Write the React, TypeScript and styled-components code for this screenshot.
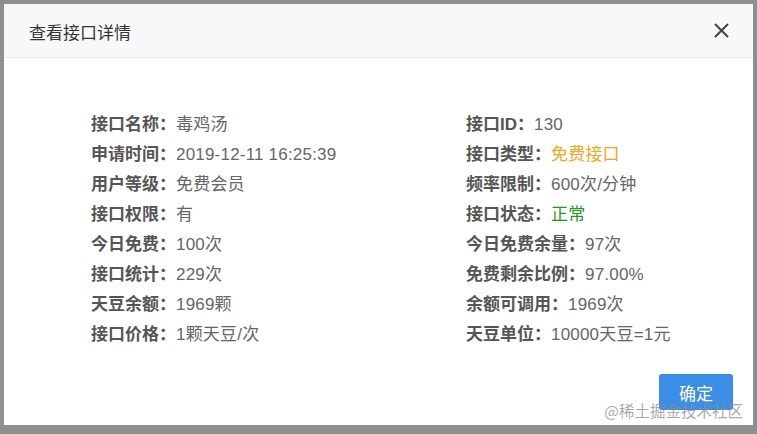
import React from "react";
import styled, { createGlobalStyle } from "styled-components";

const GlobalStyle = createGlobalStyle`
  html, body {
    margin: 0;
    padding: 0;
    background: #8f8f8f;
    font-family: "Liberation Sans", "Noto Sans CJK SC", sans-serif;
  }
`;

const Backdrop = styled.div`
  position: relative;
  width: 757px;
  height: 434px;
  padding: 4px 4px 9px 4px;
  box-sizing: border-box;
  background: #8f8f8f;
  overflow: hidden;
`;

const Modal = styled.div`
  width: 749px;
  height: 421px;
  background: #fff;
  display: flex;
  flex-direction: column;
`;

const Header = styled.div`
  height: 53px;
  flex-shrink: 0;
  display: flex;
  align-items: center;
  justify-content: space-between;
  padding: 0 22px 0 25px;
  background: #f8f8f8;
  border-bottom: 1px solid #e8e8e8;
`;

const Title = styled.span`
  font-size: 17px;
  color: #333;
  padding-top: 2px;
`;

const CloseButton = styled.button`
  border: none;
  background: transparent;
  padding: 0;
  width: 20px;
  height: 20px;
  display: flex;
  align-items: center;
  justify-content: center;
  cursor: pointer;
`;

const Body = styled.div`
  flex: 1;
  display: grid;
  grid-template-columns: 375px 1fr;
  grid-template-rows: repeat(8, 30px);
  grid-auto-flow: column;
  align-content: start;
  padding: 52px 0 0 87px;
`;

const Row = styled.div`
  font-size: 17px;
  line-height: 30px;
  height: 30px;
  white-space: nowrap;
`;

const Label = styled.span`
  font-weight: bold;
  color: #555;
`;

const Value = styled.span<{ $tone?: "orange" | "green" }>`
  color: ${(p) =>
    p.$tone === "orange" ? "#f5a623" : p.$tone === "green" ? "#1b9a1b" : "#666"};
  letter-spacing: 0.2px;
`;

const Footer = styled.div`
  display: flex;
  justify-content: flex-end;
  padding: 0 20px 15px 0;
`;

const OkButton = styled.button`
  width: 74px;
  height: 36px;
  border: none;
  border-radius: 3px;
  background: #3a8ee6;
  color: #fff;
  font-size: 17px;
  font-family: "Liberation Sans", "Noto Sans CJK SC", sans-serif;
  cursor: pointer;
`;

const Watermark = styled.div`
  position: absolute;
  right: 14px;
  bottom: 13px;
  font-size: 15.5px;
  color: rgba(140, 140, 140, 0.75);
  font-family: "Noto Sans CJK SC", sans-serif;
  pointer-events: none;
`;

type Item = { label: string; value: string; tone?: "orange" | "green" };

const items: Item[] = [
  { label: "接口名称：", value: "毒鸡汤" },
  { label: "申请时间：", value: "2019-12-11 16:25:39" },
  { label: "用户等级：", value: "免费会员" },
  { label: "接口权限：", value: "有" },
  { label: "今日免费：", value: "100次" },
  { label: "接口统计：", value: "229次" },
  { label: "天豆余额：", value: "1969颗" },
  { label: "接口价格：", value: "1颗天豆/次" },
  { label: "接口ID：", value: "130" },
  { label: "接口类型：", value: "免费接口", tone: "orange" },
  { label: "频率限制：", value: "600次/分钟" },
  { label: "接口状态：", value: "正常", tone: "green" },
  { label: "今日免费余量：", value: "97次" },
  { label: "免费剩余比例：", value: "97.00%" },
  { label: "余额可调用：", value: "1969次" },
  { label: "天豆单位：", value: "10000天豆=1元" },
];

const App: React.FC = () => {
  return (
    <>
      <GlobalStyle />
      <Backdrop>
        <Modal>
          <Header>
            <Title>查看接口详情</Title>
            <CloseButton aria-label="close">
              <svg width="15" height="15" viewBox="0 0 15 15">
                <path
                  d="M1.5 1.5 L13.5 13.5 M13.5 1.5 L1.5 13.5"
                  stroke="#444"
                  strokeWidth="2"
                  strokeLinecap="round"
                />
              </svg>
            </CloseButton>
          </Header>
          <Body>
            {items.map((it) => (
              <Row key={it.label}>
                <Label>{it.label}</Label>
                <Value $tone={it.tone}>{it.value}</Value>
              </Row>
            ))}
          </Body>
          <Footer>
            <OkButton>确定</OkButton>
          </Footer>
        </Modal>
        <Watermark>@稀土掘金技术社区</Watermark>
      </Backdrop>
    </>
  );
};

export default App;
